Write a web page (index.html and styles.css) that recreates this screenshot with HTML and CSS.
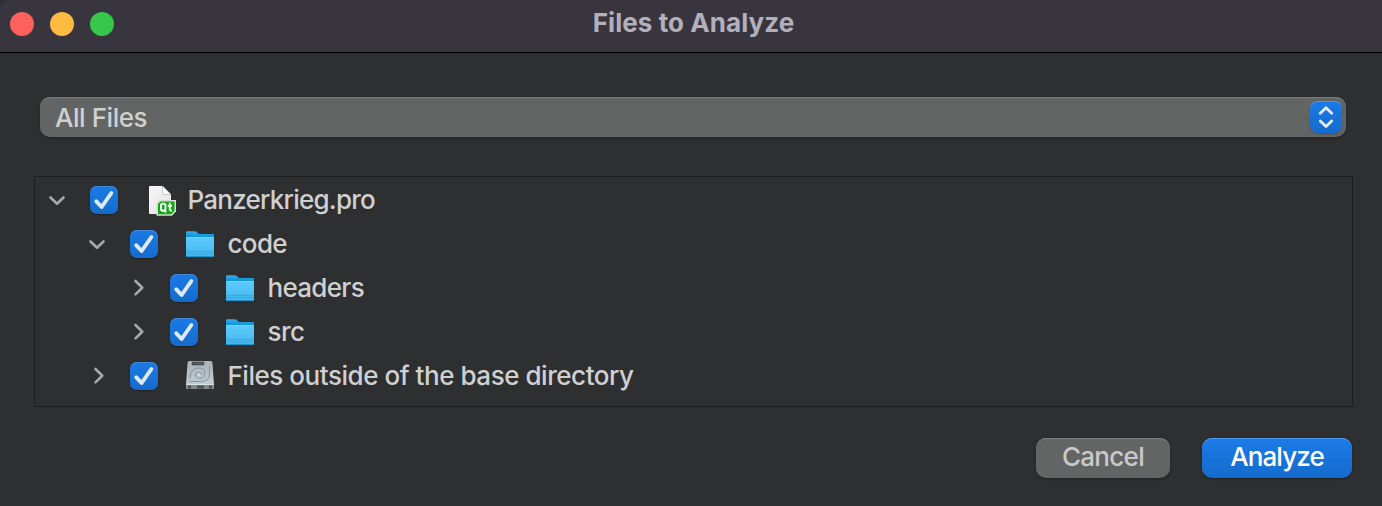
FILE: index.html
```html
<!DOCTYPE html>
<html lang="en">
<head>
<meta charset="utf-8">
<title>Files to Analyze</title>
<link rel="stylesheet" href="styles.css">
</head>
<body>
<svg class="defs" width="0" height="0" aria-hidden="true">
  <defs>
    <linearGradient id="folder-front" x1="0" y1="0" x2="0" y2="1">
      <stop offset="0" stop-color="#5fcbff"/><stop offset="1" stop-color="#42b5ec"/>
    </linearGradient>
    <linearGradient id="folder-back" x1="0" y1="0" x2="0" y2="1">
      <stop offset="0" stop-color="#45a9e4"/><stop offset=".15" stop-color="#139be0"/><stop offset=".3" stop-color="#0890d2"/>
    </linearGradient>
    <linearGradient id="disk-top" x1="0" y1="0" x2="0" y2="1">
      <stop offset="0" stop-color="#a9b4b9"/><stop offset="1" stop-color="#c4d1d8"/>
    </linearGradient>
    <linearGradient id="paper" x1="0" y1="0" x2="1" y2="1">
      <stop offset="0" stop-color="#f8f8f8"/><stop offset="1" stop-color="#e2e2e2"/>
    </linearGradient>
  </defs>
  <symbol id="down" viewBox="0 0 20 20"><path d="M3.500 7.500 10 13.800 16.500 7.500" fill="none" stroke="#a8a8a9" stroke-width="2.600" stroke-linecap="round" stroke-linejoin="round"/></symbol>
  <symbol id="right" viewBox="0 0 20 20"><path d="M8.500 3 15.300 9.700 8.500 16.400" fill="none" stroke="#a8a8a9" stroke-width="2.600" stroke-linecap="round" stroke-linejoin="round"/></symbol>
  <symbol id="check" viewBox="0 0 28 28"><path d="M6.300 15.300 11.600 21 21.400 7" fill="none" stroke="#dfeaf9" stroke-width="3.900" stroke-linecap="round" stroke-linejoin="round"/></symbol>
  <symbol id="folder" viewBox="0 0 32 32">
    <path d="M0 27.300V4.200Q0 3.200 1 3.200H8.500Q10 3.200 11 4.300L12.500 5.500Q13 6 14 6H27Q28 6 28 7V27.300Q28 28.800 27 29H1Q0 28.800 0 27.300Z" fill="url(#folder-back)"/>
    <path d="M0 9.500H28V28Q28 29 27 29H1Q0 29 0 28Z" fill="url(#folder-front)"/>
    <path d="M.5 9.500H27.500" stroke="#70d5ff"/>
    <path d="M0 23.500H28M0 25.500H28" stroke="#31a4dc" stroke-width=".7"/>
    <path d="M.2 28.500H27.800" stroke="#1e92cb"/>
  </symbol>
  <symbol id="document" viewBox="0 0 32 32">
    <path d="M4 2H16.500L25 10.500V29Q25 30 24 30H4Q3 30 3 29V3Q3 2 4 2Z" fill="url(#paper)"/>
    <path d="M16.500 2 25 10.500H18Q16.500 10.500 16.500 9Z" fill="#fff" stroke="#aaa" stroke-width=".6"/>
    <path d="M13.500 16H30V27.500L26 31.800H10.500V19.500Z" fill="#d5dcd2"/>
    <path d="M14.500 17.500H28.500V26.800L25.200 30.200H12V20Z" fill="#12a812"/>
    <path d="M16.500 19.800H18Q19.500 19.800 19.500 21.500V25Q19.500 26.800 18 26.800H16.500Q15 26.800 15 25V21.500Q15 19.800 16.500 19.800ZM17.700 25.500 20 28.500M23.800 18.800V25.300Q23.800 26.800 26 26.600M21.800 21.700H26" fill="none" stroke="#fff" stroke-width="1.900"/>
  </symbol>
  <symbol id="disk" viewBox="0 0 32 32">
    <path d="M3.500 1H24.500Q26.200 1 26.400 2.500L28 24V28Q28 29 27 29H1Q0 29 0 28V24L1.600 2.500Q1.800 1 3.500 1Z" fill="url(#disk-top)"/>
    <path d="M5.800 1.700H18.200V5.300H5.800Z" fill="#454c50"/><path d="M7 3.500H17" stroke="#737c80" stroke-width=".6"/>
    <path d="M0 25H28V28Q28 29 27 29H1Q0 29 0 28Z" fill="#7f898e"/>
    <path d="M.5 24.500H27.500" stroke="#dce5e9"/>
    <path d="M2 25.500H5V28.500H2ZM11 25.500H18V28.500H11ZM23 25.500H26V28.500H23Z" fill="#4b5357"/>
    <path d="M3 21.500H14.500C20 21.500 23.500 19 23.500 13.500V6M4 18.500C4 12 7.500 8 13 8C16 8 18 9 18.500 11V14.500C18.500 19.500 9.500 19.500 9.500 15C9.500 11.500 15.500 11.500 16 14.500" fill="none" stroke="#7b878d" stroke-width=".8"/>
    <circle cx="13" cy="15" r="1.400" fill="#d4dfe4"/>
  </symbol>
</svg>
<main class="dialog">
  <header class="titlebar">
    <div class="lights"><i class="light close"></i><i class="light minimize"></i><i class="light expand"></i></div>
    <h1 class="title">Files to Analyze</h1>
  </header>
  <section class="content">
    <div class="select"><span class="select-label">All Files</span>
      <span class="stepper"><svg width="32" height="32" viewBox="0 0 32 32"><path d="M10.300 12.200 16 6.700 21.700 12.200M10.300 20 16 25.500 21.700 20" fill="none" stroke="#dfeaf9" stroke-width="2.900" stroke-linecap="round" stroke-linejoin="round"/></svg></span>
    </div>
    <div class="tree">
      <div class="row"><svg class="arrow"><use href="#down"/></svg><span class="checkbox"><svg><use href="#check"/></svg></span><svg class="icon"><use href="#document"/></svg><span class="name name-project">Panzerkrieg.pro</span></div>
      <div class="row level-1"><svg class="arrow"><use href="#down"/></svg><span class="checkbox"><svg><use href="#check"/></svg></span><svg class="icon"><use href="#folder"/></svg><span class="name name-code">code</span></div>
      <div class="row level-2"><svg class="arrow"><use href="#right"/></svg><span class="checkbox"><svg><use href="#check"/></svg></span><svg class="icon"><use href="#folder"/></svg><span class="name name-headers">headers</span></div>
      <div class="row level-2"><svg class="arrow"><use href="#right"/></svg><span class="checkbox"><svg><use href="#check"/></svg></span><svg class="icon"><use href="#folder"/></svg><span class="name name-src">src</span></div>
      <div class="row level-1"><svg class="arrow"><use href="#right"/></svg><span class="checkbox"><svg><use href="#check"/></svg></span><svg class="icon"><use href="#disk"/></svg><span class="name name-outside">Files outside of the base directory</span></div>
    </div>
    <footer class="actions"><button class="button cancel">Cancel</button><button class="button analyze">Analyze</button></footer>
  </section>
</main>
</body>
</html>
```
FILE: styles.css
```css
* { box-sizing: border-box; }
body { margin: 0; background: #2e2f31; color: #d0d0d1; font: 450 26px/32px Inter, "Liberation Sans", sans-serif; overflow: hidden; }
.defs { position: absolute; }
.dialog { height: 506px; display: flex; flex-direction: column; }
.titlebar { height: 53px; flex: none; display: grid; grid-template-columns: 1fr auto 1fr; background: #39353f; border-bottom: 1px solid #000; border-top-left-radius: 10px; }
.lights { display: flex; gap: 16px; padding: 12px 10px; }
.light { width: 24px; height: 24px; border-radius: 50%; }
.close { background: #fe605b; }
.minimize { background: #fdbb42; }
.expand { background: #35c84a; }
.title { margin: 7px 0 0; padding-left: 5px; font-size: 26px; line-height: 32px; font-weight: 700; color: #b3afbb; letter-spacing: .07px; }
.content { padding: 44px 29px 0 34px; }
.select { margin: 0 7px 0 6px; height: 40px; padding: 0 4px 0 15px; display: flex; align-items: center; justify-content: space-between; border-radius: 10px; background: #636564; box-shadow: inset 0 1px #7c7e7d, 0 1px 2px #202122; }
.select-label { letter-spacing: -.45px; margin-top: 2px; }
.stepper { width: 32px; height: 32px; border-radius: 8px; background: linear-gradient(#1b7ae6, #156bcc); box-shadow: inset 0 1px #4a95e9, 0 1px 2px #0003; }
.stepper svg { display: block; }
.tree { margin-top: 39px; height: 231px; padding: 1px 0 0 12px; border: 1px solid #1d1e1f; }
.row { height: 44px; display: flex; align-items: center; }
.level-1 { padding-left: 40px; }
.level-2 { padding-left: 80px; }
.arrow { width: 20px; height: 20px; margin-right: 23px; }
.checkbox { width: 28px; height: 28px; border-radius: 7px; background: linear-gradient(#1b7ae6, #156bcc); box-shadow: inset 0 1px #4389db, 0 1px 2px #0005; }
.checkbox svg { display: block; width: 28px; height: 28px; }
.icon { width: 32px; height: 32px; margin: 0 9.5px 0 28px; }
.name { white-space: nowrap; }
.name-project { letter-spacing: -.76px; }
.name-code { letter-spacing: -.65px; }
.name-headers { letter-spacing: -.7px; }
.name-src { letter-spacing: -.5px; }
.name-outside { letter-spacing: -.46px; }
.actions { margin: 31px 1px 0 0; display: flex; justify-content: flex-end; gap: 32px; }
.button { height: 40px; padding: 0 0 2px; border: 0; border-radius: 10px; font: inherit; display: flex; justify-content: center; align-items: center; }
.cancel { width: 134px; color: #c9c9c9; background: #636564; box-shadow: inset 0 1px #7c7e7d, 0 1px 2px #202122; letter-spacing: -.7px; }
.analyze { width: 150px; color: #fff; background: linear-gradient(#1b7be8, #156bcc); box-shadow: inset 0 1px #4b98ed, 0 1px 2px #202122; letter-spacing: -.9px; }
```
